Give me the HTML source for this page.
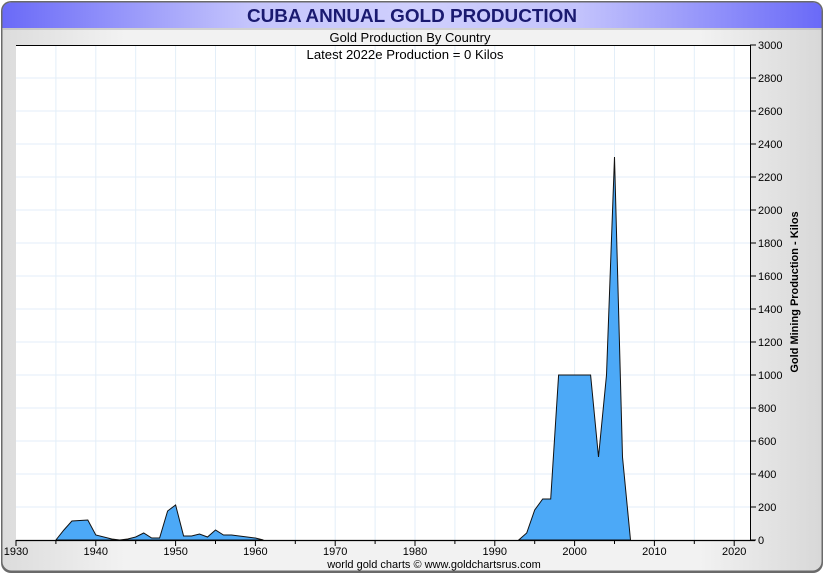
<!DOCTYPE html>
<html><head><style>
html,body{margin:0;padding:0;background:#fff;width:825px;height:575px;overflow:hidden}
</style></head><body>
<svg width="825" height="575" viewBox="0 0 825 575" xmlns="http://www.w3.org/2000/svg" font-family="Liberation Sans, sans-serif">
<defs>
<linearGradient id="tb" x1="0" x2="1" y1="0" y2="0">
<stop offset="0" stop-color="#6a6af8"/><stop offset="0.3" stop-color="#c4c4fc"/><stop offset="0.5" stop-color="#cfcffd"/><stop offset="0.7" stop-color="#c4c4fc"/><stop offset="1" stop-color="#6a6af8"/>
</linearGradient>
<linearGradient id="bg" x1="0" x2="1" y1="0" y2="0">
<stop offset="0" stop-color="#dcdcdc"/><stop offset="0.15" stop-color="#f2f2f2"/><stop offset="0.85" stop-color="#f2f2f2"/><stop offset="1" stop-color="#d8d8d8"/>
</linearGradient>
</defs>
<rect x="1" y="1" width="822" height="572" rx="10" fill="#6a6a6a"/>
<rect x="2.5" y="2.5" width="819" height="568" rx="9" fill="url(#bg)"/>
<path d="M2.5 28 V12 Q2.5 2.5 12 2.5 H812 Q821.5 2.5 821.5 12 V28 Z" fill="url(#tb)"/>
<line x1="3" y1="29" x2="821" y2="29" stroke="#b0b0b0"/>
<text x="412" y="22" text-anchor="middle" font-size="18" font-weight="bold" fill="#1a1a70" textLength="330" lengthAdjust="spacingAndGlyphs">CUBA ANNUAL GOLD PRODUCTION</text>
<text x="410" y="42" text-anchor="middle" font-size="12.5" fill="#000" textLength="161" lengthAdjust="spacingAndGlyphs">Gold Production By Country</text>
<rect x="16" y="45" width="734" height="495" fill="#fff"/>
<g stroke="#e3eef8" stroke-width="1">
<path d="M55.9 45V540M95.8 45V540M135.7 45V540M175.6 45V540M215.5 45V540M255.4 45V540M295.3 45V540M335.2 45V540M375.1 45V540M415 45V540M454.9 45V540M494.8 45V540M534.7 45V540M574.6 45V540M614.5 45V540M654.4 45V540M694.3 45V540M734.2 45V540"/>
<path d="M16 507H750M16 474H750M16 441H750M16 408H750M16 375H750M16 342H750M16 309H750M16 276H750M16 243H750M16 210H750M16 177H750M16 144H750M16 111H750M16 78H750"/>
</g>
<text x="405" y="59" text-anchor="middle" font-size="12.5" fill="#000" textLength="197" lengthAdjust="spacingAndGlyphs">Latest 2022e Production = 0 Kilos</text>
<path d="M55.9 540 L63.9 530 L71.9 521 L87.8 520 L95.8 535 L111.8 539 L119.7 540 L127.7 539 L135.7 537 L143.7 533 L151.7 538 L159.6 538 L167.6 511 L175.6 505 L183.6 536 L191.6 536 L199.5 534 L207.5 537 L215.5 530 L223.5 535 L231.5 535 L255.4 538 L263.4 540 Z" fill="#4ca9f7" stroke="#111" stroke-width="1"/>
<path d="M518.7 540 L526.7 533 L534.7 510 L542.7 499 L550.7 499 L558.6 375 L590.6 375 L598.5 457 L606.5 375 L614.5 157 L622.5 457 L630.5 540 Z" fill="#4ca9f7" stroke="#111" stroke-width="1"/>
<line x1="16" y1="45.5" x2="750" y2="45.5" stroke="#000"/>
<line x1="16" y1="540.5" x2="755" y2="540.5" stroke="#000" stroke-width="1.2"/>
<line x1="750.5" y1="45" x2="750.5" y2="541" stroke="#000"/>
<g stroke="#000">
<path d="M16 540V546M55.9 540V544M95.8 540V546M135.7 540V544M175.6 540V546M215.5 540V544M255.4 540V546M295.3 540V544M335.2 540V546M375.1 540V544M415 540V546M454.9 540V544M494.8 540V546M534.7 540V544M574.6 540V546M614.5 540V544M654.4 540V546M694.3 540V544M734.2 540V546"/>
<path d="M750 540H756M750 507H756M750 474H756M750 441H756M750 408H756M750 375H756M750 342H756M750 309H756M750 276H756M750 243H756M750 210H756M750 177H756M750 144H756M750 111H756M750 78H756M750 45H756"/>
</g>
<g font-size="11" fill="#000">
<text x="16" y="555" text-anchor="middle">1930</text>
<text x="95.8" y="555" text-anchor="middle">1940</text>
<text x="175.6" y="555" text-anchor="middle">1950</text>
<text x="255.4" y="555" text-anchor="middle">1960</text>
<text x="335.2" y="555" text-anchor="middle">1970</text>
<text x="415" y="555" text-anchor="middle">1980</text>
<text x="494.8" y="555" text-anchor="middle">1990</text>
<text x="574.6" y="555" text-anchor="middle">2000</text>
<text x="654.4" y="555" text-anchor="middle">2010</text>
<text x="734.2" y="555" text-anchor="middle">2020</text>
</g>
<g font-size="11" fill="#000">
<text x="758" y="544">0</text><text x="758" y="511">200</text><text x="758" y="478">400</text><text x="758" y="445">600</text><text x="758" y="412">800</text><text x="758" y="379">1000</text><text x="758" y="346">1200</text><text x="758" y="313">1400</text><text x="758" y="280">1600</text><text x="758" y="247">1800</text><text x="758" y="214">2000</text><text x="758" y="181">2200</text><text x="758" y="148">2400</text><text x="758" y="115">2600</text><text x="758" y="82">2800</text><text x="758" y="49">3000</text>
</g>
<text transform="translate(798,292) rotate(-90)" text-anchor="middle" font-size="11" font-weight="bold" fill="#000">Gold Mining Production - Kilos</text>
<text x="434" y="568" text-anchor="middle" font-size="11" fill="#000">world gold charts © www.goldchartsrus.com</text>
</svg>
</body></html>
